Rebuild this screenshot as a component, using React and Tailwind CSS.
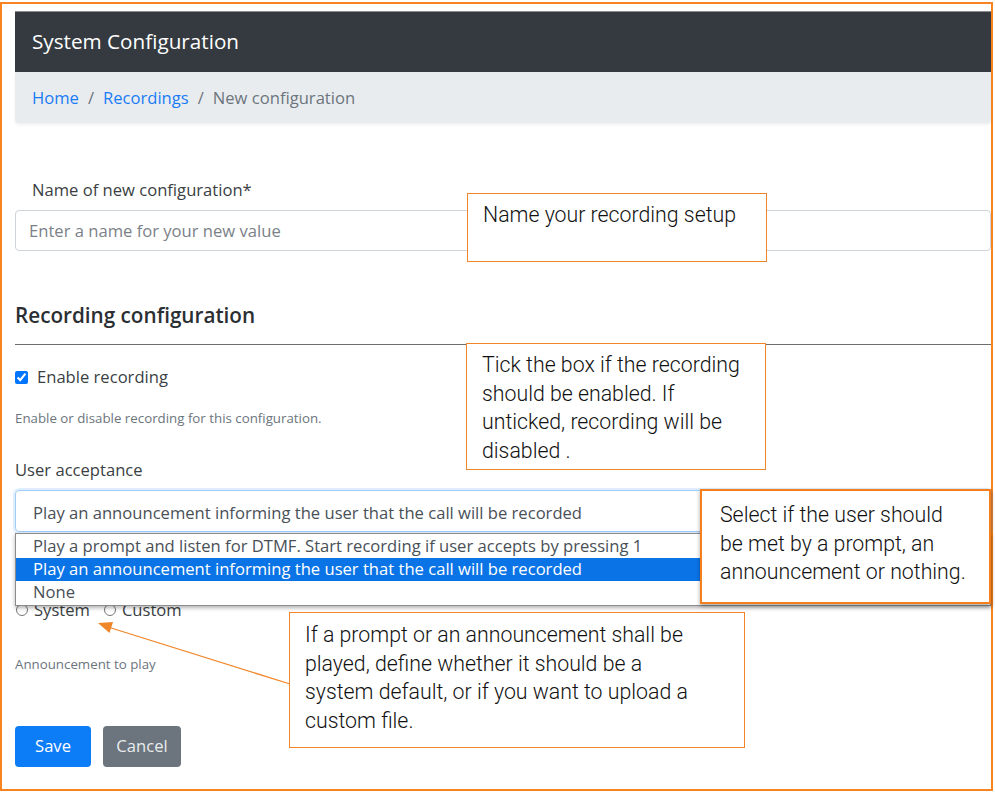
import React from "react";

const page = { fontFamily: '"Open Sans", "Noto Sans", sans-serif' };
const note = { fontFamily: 'Roboto, "Noto Sans", sans-serif' };

function Callout({ className, children }) {
  return (
    <div className={`absolute bg-white text-[21.3px] font-light leading-[28.7px] text-[#111] whitespace-nowrap ${className}`} style={note}>
      {children}
    </div>
  );
}

function Arrow() {
  return (
    <svg className="pointer-events-none absolute left-0 top-0" width="995" height="792">
      <line x1="290" y1="684" x2="108" y2="627" stroke="#f0862a" strokeWidth="1.3" />
      <polygon points="98,623 113,622 109.5,633" fill="#f0862a" />
    </svg>
  );
}

export default function App() {
  return (
    <div className="relative h-[792px] w-[995px] overflow-hidden bg-white pt-[2px]" style={page}>
      <div className="h-[789px] w-[993px] border-2 border-[#f7841f] pl-[13px] pt-[7px]">
        <div className="flex h-[61px] items-center border-t border-[#8a8d90] bg-[#343a40] pl-[17px] text-[20.7px] text-white">
          System Configuration
        </div>
        <div className="flex h-[51px] items-center rounded-b-[4px] bg-[#e9ecef] pl-[17px] pt-[2px] text-[16.6px] shadow-[0_2px_3px_rgba(0,0,0,0.06)]">
          <span className="text-[#1a7cf5]">Home</span>
          <span className="px-[9px] text-[#6c757d]">/</span>
          <span className="text-[#1a7cf5]">Recordings</span>
          <span className="px-[9px] text-[#6c757d]">/</span>
          <span className="text-[#6c757d]">New configuration</span>
        </div>

        <div className="mt-[55px] pl-[17px] text-[16.6px] leading-[24px] text-[#3a3f44]">Name of new configuration*</div>
        <div className="mt-[8px] flex h-[41px] items-center rounded-[4px] border border-[#ced4da] pl-[13px] pt-[2px] text-[16.6px] text-[#7b8188]">
          Enter a name for your new value
        </div>

        <div className="mt-[50px] text-[20.7px] font-semibold leading-[28px] text-[#2b2f33]">Recording configuration</div>
        <div className="mt-[15px] border-t border-[#6f6f6f]" />

        <label className="mt-[20px] flex h-[24px] items-center gap-[9px] text-[16.6px] text-[#3a3f44]">
          <input type="checkbox" defaultChecked className="m-0 h-[13px] w-[13px] accent-[#0075ff]" />
          Enable recording
        </label>
        <div className="mt-[19px] text-[13.3px] leading-[20px] text-[#6c757d]">Enable or disable recording for this configuration.</div>

        <div className="mt-[30px] text-[16.6px] leading-[24px] text-[#3a3f44]">User acceptance</div>
        <div className="relative mt-[8px]">
          <div className="flex h-[42px] items-center rounded-[4px] border border-[#9fcdf7] pl-[17px] pt-[4px] text-[16.6px] text-[#495057] shadow-[0_0_0_2px_rgba(0,123,255,0.12)]">
            Play an announcement informing the user that the call will be recorded
          </div>
          <div className="absolute left-0 right-0 top-[43px] z-10 border border-[#8c8c8c] bg-white py-[1px] text-[16.6px] text-[#495057] shadow-[0_2px_4px_rgba(0,0,0,0.3)]">
            <div className="flex h-[23px] items-center pl-[17px]">Play a prompt and listen for DTMF. Start recording if user accepts by pressing 1</div>
            <div className="flex h-[23px] items-center bg-[#0a74e6] pl-[17px] text-white">Play an announcement informing the user that the call will be recorded</div>
            <div className="flex h-[23px] items-center pl-[17px]">None</div>
          </div>
        </div>

        <div className="mt-[68px] flex h-[20px] items-center text-[16.6px] text-[#3a3f44]">
          <input type="radio" name="src" className="m-0 ml-[1px] h-[12px] w-[12px]" />
          <span className="ml-[6px]">System</span>
          <input type="radio" name="src" className="m-0 ml-[14px] h-[12px] w-[12px]" />
          <span className="ml-[6px]">Custom</span>
        </div>

        <div className="mt-[34px] text-[13.3px] leading-[20px] text-[#6c757d]">Announcement to play</div>

        <div className="mt-[52px] flex gap-[12px]">
          <button type="button" className="h-[41px] w-[76px] rounded-[4px] bg-[#0d7cf7] text-[16.6px] text-white">Save</button>
          <button type="button" className="h-[41px] w-[78px] rounded-[4px] bg-[#6c757d] text-[16.6px] text-[#e9ecef]">Cancel</button>
        </div>
      </div>

      <Callout className="left-[467px] top-[193px] h-[69px] w-[300px] border border-[#f0862a] pl-[15px] pt-[7px]">
        Name your recording setup
      </Callout>
      <Callout className="left-[466px] top-[343px] h-[127px] w-[300px] border border-[#f0862a] pl-[15px] pt-[7px]">
        Tick the box if the recording<br />should be enabled. If<br />unticked, recording will be<br />disabled .
      </Callout>
      <Callout className="left-[700px] top-[489px] z-20 h-[115px] w-[291px] border-2 border-[#f47f1c] pl-[18px] pt-[10px] shadow-[0_2px_4px_rgba(0,0,0,0.35)]">
        Select if the user should<br />be met by a prompt, an<br />announcement or nothing.
      </Callout>
      <Callout className="left-[289px] top-[612px] z-20 h-[136px] w-[456px] border border-[#f0862a] pl-[15px] pt-[8px]">
        If a prompt or an announcement shall be<br />played, define whether it should be a<br />system default, or if you want to upload a<br />custom file.
      </Callout>
      <Arrow />
    </div>
  );
}
